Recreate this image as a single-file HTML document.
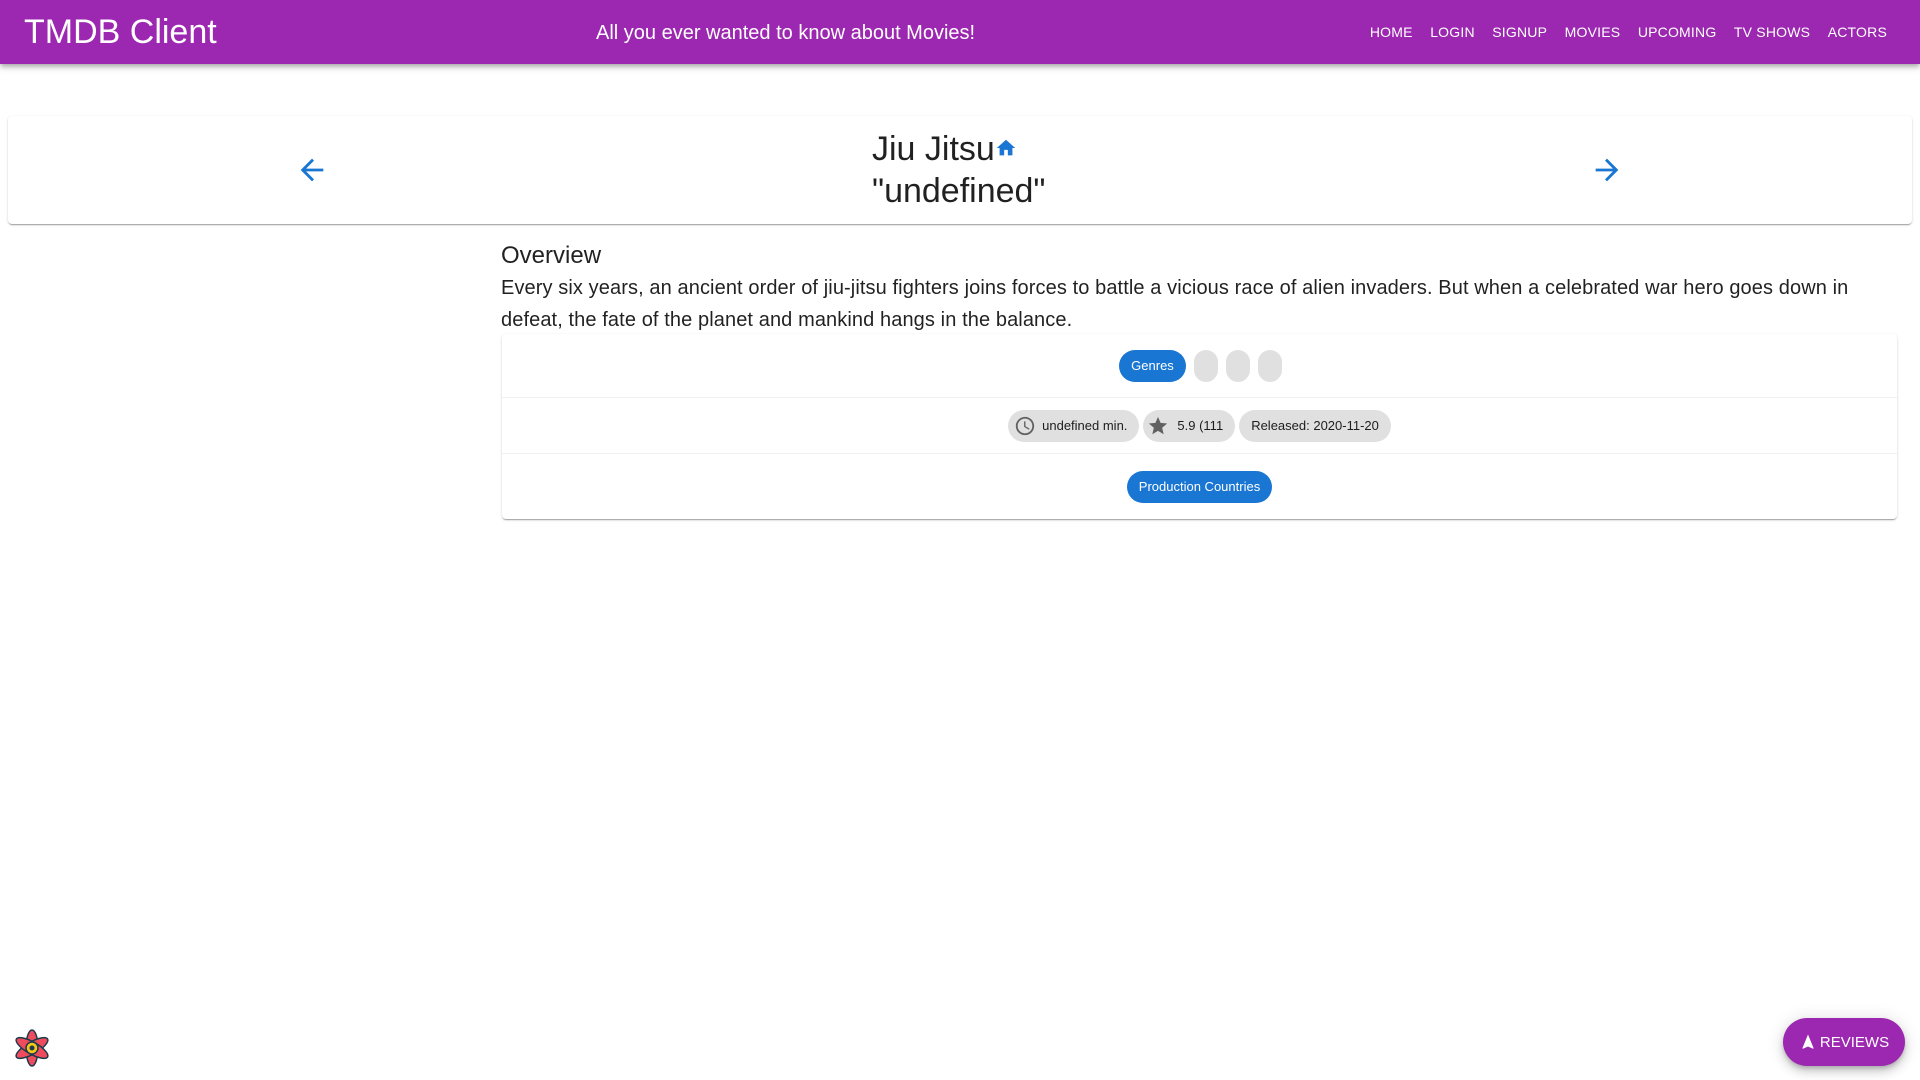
<!DOCTYPE html>
<html><head><meta charset="utf-8"><style>
*{box-sizing:border-box;margin:0;padding:0}
body{width:1920px;height:1080px;overflow:hidden;background:#fff;font-family:"Liberation Sans",Arial,sans-serif;color:rgba(0,0,0,.87);position:relative}
.bar{position:absolute;left:0;top:0;width:1920px;height:64px;background:#9c27b0;color:#fff;box-shadow:0 2px 4px -1px rgba(0,0,0,.2),0 4px 5px 0 rgba(0,0,0,.14),0 1px 10px 0 rgba(0,0,0,.12)}
.bar .t{position:absolute;left:24px;top:11px;font-size:34px;line-height:42px}
.bar .s{position:absolute;left:596px;top:20px;font-size:20px;line-height:26px}
.nav{position:absolute;right:33px;top:24px;display:flex;font-size:14px;letter-spacing:.2px}
.nav span{margin-left:17.5px}
.card{position:absolute;left:8px;top:116px;width:1904px;height:108px;background:#fff;box-shadow:0 2px 1px -1px rgba(0,0,0,.2),0 1px 1px 0 rgba(0,0,0,.14),0 1px 3px 0 rgba(0,0,0,.12);border-radius:4px}
.title{position:absolute;left:864px;top:12px;font-size:34px;line-height:42px;color:rgba(0,0,0,.87)}
.arr{position:absolute;top:37px}
h5{position:absolute;left:501px;top:240px;font-size:24px;font-weight:400;line-height:32px}
p.ov{position:absolute;left:501px;top:272px;width:1390px;font-size:20px;line-height:32px;letter-spacing:.1px}
.paper{position:absolute;left:502px;top:334px;width:1395px;height:185px;box-shadow:0 2px 1px -1px rgba(0,0,0,.2),0 1px 1px 0 rgba(0,0,0,.14),0 1px 3px 0 rgba(0,0,0,.12);border-radius:4px;background:#fff}
.row{position:absolute;left:0;width:100%;display:flex;justify-content:center;align-items:center;border-bottom:1px solid #f0f0f0}
.chip{height:32px;border-radius:16px;display:inline-flex;align-items:center;font-size:13px;padding:0 12px;background:#e0e0e0;color:rgba(0,0,0,.87);margin:0 2px;white-space:nowrap}
.chip.b{background:#1976d2;color:#fff}
.fab{position:absolute;left:1783px;top:1018px;width:122px;height:48px;border-radius:24px;background:#9c27b0;color:#fff;font-size:15px;display:flex;align-items:center;justify-content:center;box-shadow:0 3px 5px -1px rgba(0,0,0,.2),0 6px 10px 0 rgba(0,0,0,.14),0 1px 18px 0 rgba(0,0,0,.12)}
</style></head><body>
<div class="bar"><div class="t">TMDB Client</div><div class="s">All you ever wanted to know about Movies!</div>
<div class="nav"><span>HOME</span><span>LOGIN</span><span>SIGNUP</span><span>MOVIES</span><span>UPCOMING</span><span>TV SHOWS</span><span>ACTORS</span></div></div>
<div class="card">
<svg class="arr" style="left:287px" width="34" height="34" viewBox="0 0 24 24"><path fill="#1976d2" d="M20 11H7.830l5.59-5.59L12 4l-8 8 8 8 1.41-1.41L7.83 13H20v-2z"/></svg>
<div class="title">Jiu Jitsu<svg width="22" height="22" viewBox="0 0 24 24" style="vertical-align:top;margin-top:9px"><path fill="#1976d2" d="M10 20v-6h4v6h5v-8h3L12 3 2 12h3v8z"/></svg><br>"undefined"</div>
<svg class="arr" style="left:1582px" width="34" height="34" viewBox="0 0 24 24"><path fill="#1976d2" d="M12 4l-1.41 1.41L16.170 11H4v2h12.17l-5.58 5.59L12 20l8-8z"/></svg>
</div>
<h5>Overview</h5>
<p class="ov">Every six years, an ancient order of jiu-jitsu fighters joins forces to battle a vicious race of alien invaders. But when a celebrated war hero goes down in<br>defeat, the fate of the planet and mankind hangs in the balance.</p>
<div class="paper">
<div class="row" style="top:0;height:64px"><span class="chip b" style="margin-right:8px">Genres</span><span class="chip" style="margin:0 4px 0 0"></span><span class="chip" style="margin:0 4px 0 4px"></span><span class="chip" style="margin:0 0 0 4px"></span></div>
<div class="row" style="top:64px;height:56px"><span class="chip" style="padding-left:6px"><svg width="22" height="22" viewBox="0 0 24 24" style="margin-right:6px"><path fill="#616161" d="M11.99 2C6.47 2 2 6.48 2 12s4.47 10 9.99 10C17.52 22 22 17.52 22 12S17.52 2 11.99 2zM12 20c-4.42 0-8-3.58-8-8s3.58-8 8-8 8 3.58 8 8-3.58 8-8 8zm.5-13H11v6l5.25 3.15.75-1.23-4.5-2.67z"/></svg>undefined min.</span><span class="chip" style="padding-left:4px"><svg width="22" height="22" viewBox="0 0 24 24" style="margin-right:8px"><path fill="#616161" d="M12 17.27L18.18 21l-1.64-7.03L22 9.24l-7.19-.61L12 2 9.19 8.63 2 9.24l5.46 4.73L5.82 21z"/></svg>5.9 (111</span><span class="chip">Released: 2020-11-20</span></div>
<div class="row" style="top:120px;height:65px;border:none"><span class="chip b">Production Countries</span></div>
</div>
<svg style="position:absolute;left:12px;top:1028px" width="40" height="40" viewBox="0 0 40 40"><g fill="#ef4b5c" stroke="#1b3a4b" stroke-width="1.5"><ellipse cx="20" cy="20" rx="6" ry="18"/><ellipse cx="20" cy="20" rx="6" ry="18" transform="rotate(60 20 20)"/><ellipse cx="20" cy="20" rx="6" ry="18" transform="rotate(-60 20 20)"/></g><circle cx="20" cy="20" r="6" fill="#f5c518" stroke="#1b3a4b" stroke-width="1.5"/><circle cx="20" cy="20" r="2.5" fill="#1b3a4b"/></svg>
<div class="fab"><svg width="18" height="22" viewBox="0 0 24 24" style="margin-right:3px"><path fill="#fff" d="M12 2L4.5 20.29l.71.71L12 18l6.79 3 .71-.71z"/></svg>REVIEWS</div>
</body></html>
